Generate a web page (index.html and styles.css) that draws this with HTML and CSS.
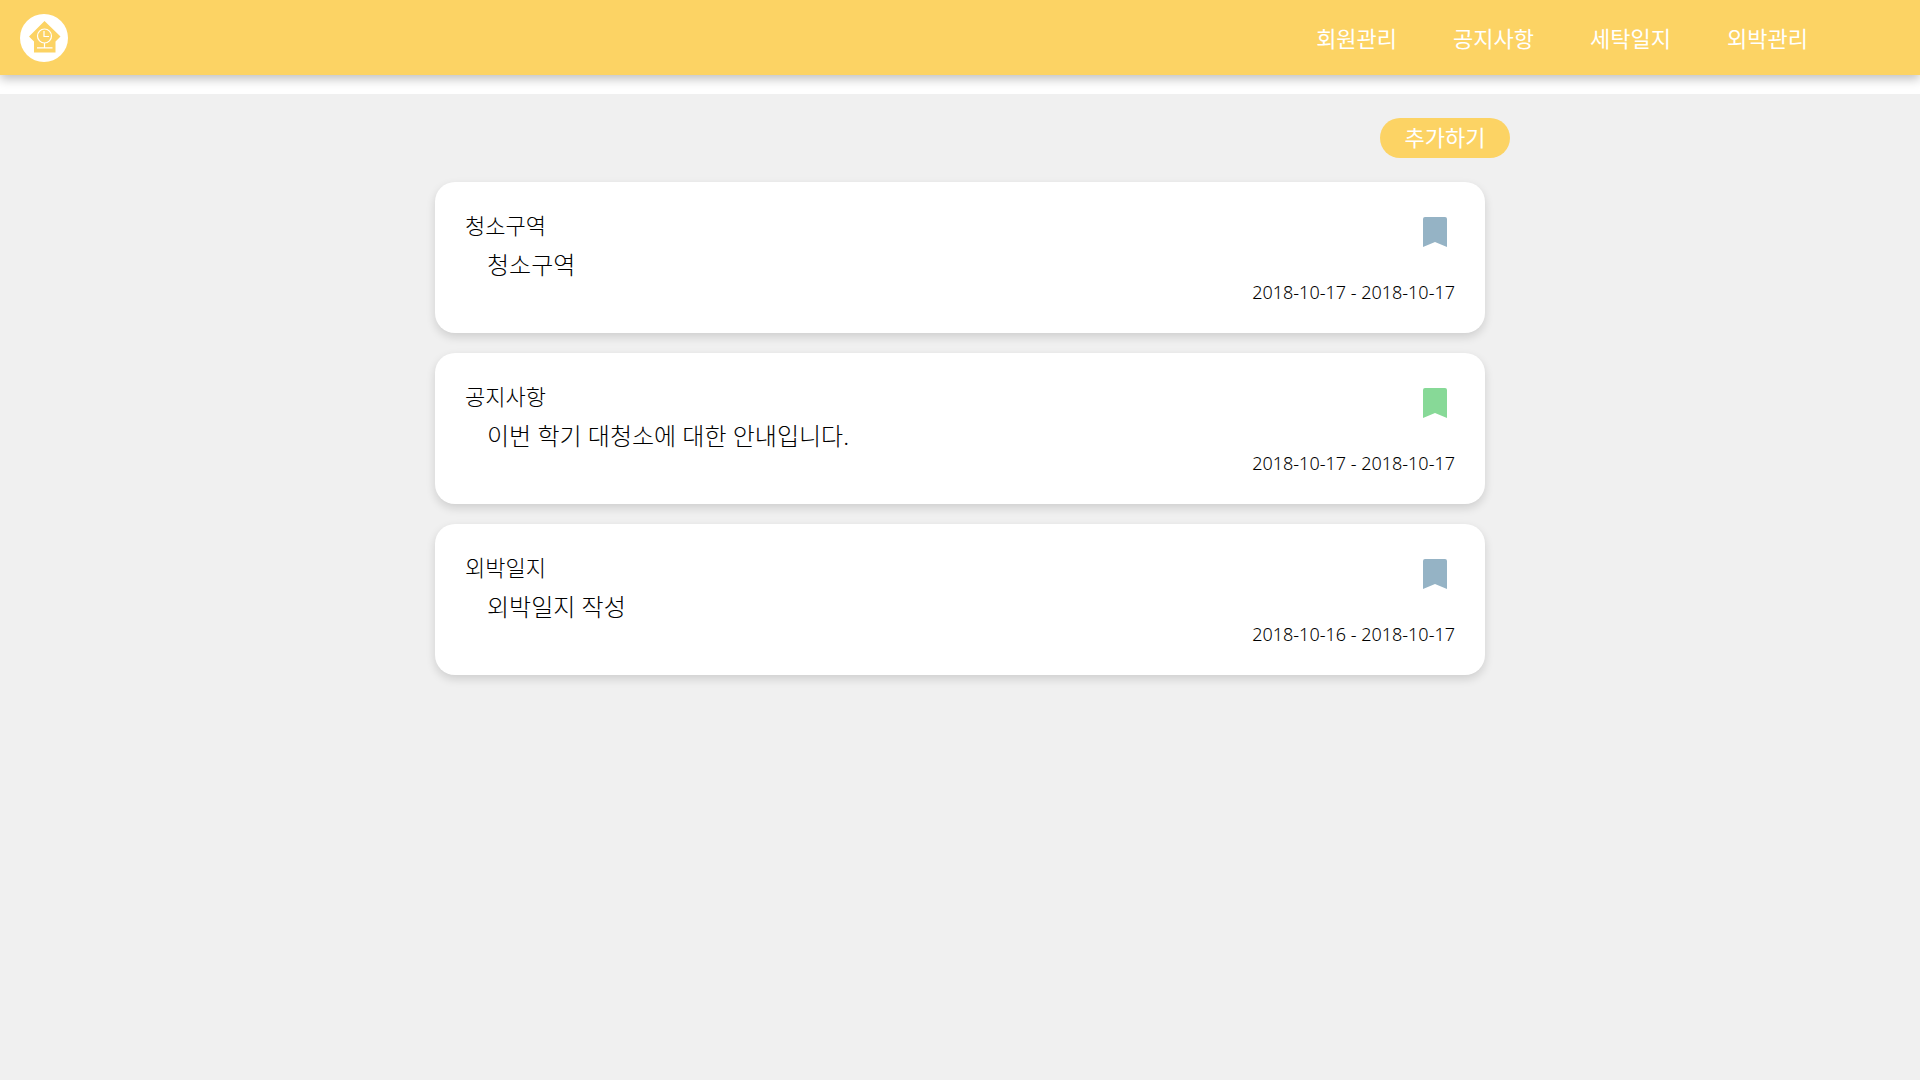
FILE: index.html
```html
<!DOCTYPE html>
<html lang="ko">
<head>
  <meta charset="utf-8">
  <meta name="viewport" content="width=device-width, initial-scale=1">
  <title>공지사항</title>
  <link rel="stylesheet" href="styles.css">
</head>
<body>
  <header class="header">
    <a class="logo" href="#" aria-label="홈">
      <svg class="logo-mark" viewBox="0 0 48 48" aria-hidden="true">
        <circle cx="24" cy="24" r="24" fill="#fff"/>
        <path d="M24.500 7 L40.500 22.500 L35.500 27.500 V38.500 H14 V27.500 L9 22.500 Z" fill="#fcd364"/>
        <g fill="none" stroke="#fff" stroke-width="1.200">
          <circle cx="24.500" cy="22" r="7"/>
          <path d="M24 17 V22.500 H29 M24.500 29 V33.500 M17 33.800 H32.500"/>
        </g>
      </svg>
    </a>
    <nav class="nav">
      <a class="nav-link" href="#">회원관리</a>
      <a class="nav-link" href="#">공지사항</a>
      <a class="nav-link" href="#">세탁일지</a>
      <a class="nav-link" href="#">외박관리</a>
    </nav>
  </header>

  <main class="board">
    <div class="toolbar">
      <button class="add-button" type="button">추가하기</button>
    </div>
    <section class="notices">
      <article class="card">
        <div class="card-text">
          <h2 class="card-title">청소구역</h2>
          <p class="card-content">청소구역</p>
        </div>
        <div class="card-side">
          <svg class="bookmark" viewBox="0 0 24 30" aria-hidden="true"><path d="M0 30V2Q0 0 2 0H22Q24 0 24 2V30L12 25Z"/></svg>
          <p class="card-date">2018-10-17 - 2018-10-17</p>
        </div>
      </article>
      <article class="card">
        <div class="card-text">
          <h2 class="card-title">공지사항</h2>
          <p class="card-content">이번 학기 대청소에 대한 안내입니다.</p>
        </div>
        <div class="card-side">
          <svg class="bookmark bookmark-green" viewBox="0 0 24 30" aria-hidden="true"><path d="M0 30V2Q0 0 2 0H22Q24 0 24 2V30L12 25Z"/></svg>
          <p class="card-date">2018-10-17 - 2018-10-17</p>
        </div>
      </article>
      <article class="card">
        <div class="card-text">
          <h2 class="card-title">외박일지</h2>
          <p class="card-content">외박일지 작성</p>
        </div>
        <div class="card-side">
          <svg class="bookmark" viewBox="0 0 24 30" aria-hidden="true"><path d="M0 30V2Q0 0 2 0H22Q24 0 24 2V30L12 25Z"/></svg>
          <p class="card-date">2018-10-16 - 2018-10-17</p>
        </div>
      </article>
    </section>
  </main>
</body>
</html>
```
FILE: styles.css
```css
* {
  box-sizing: border-box;
}

body {
  margin: 0;
  min-height: 100vh;
  display: flex;
  flex-direction: column;
  background: #fff;
  color: #000;
  font-family: "Noto Sans", "Noto Sans CJK KR", sans-serif;
  font-weight: 300;
}

.header {
  display: flex;
  align-items: center;
  justify-content: space-between;
  min-height: 75px;
  margin-bottom: 19px;
  padding: 0 112px 0 20px;
  background: #fcd364;
  box-shadow: 0 4px 10px rgba(0, 0, 0, 0.25);
}

.logo-mark {
  display: block;
  width: 48px;
  height: 48px;
}

.nav {
  display: flex;
  flex-wrap: wrap;
  gap: 56px;
}

.nav-link {
  color: #fff;
  font-size: 22px;
  font-weight: 400;
  line-height: 30px;
  text-decoration: none;
}

.board {
  flex: 1;
  padding: 24px 20px;
  background: #f0f0f0;
}

.toolbar {
  display: flex;
  justify-content: flex-end;
  max-width: 1100px;
  margin: 0 auto 24px;
}

.add-button {
  width: 130px;
  height: 40px;
  padding: 0 0 2px;
  border: 0;
  border-radius: 20px;
  background: #fcd364;
  color: #fff;
  font: inherit;
  font-size: 22px;
  font-weight: 400;
  line-height: 30px;
}

.notices {
  display: flex;
  flex-direction: column;
  gap: 20px;
  max-width: 1050px;
  margin: 0 auto;
}

.card {
  display: flex;
  justify-content: space-between;
  min-height: 151px;
  padding: 30px;
  border-radius: 20px;
  background: #fff;
  box-shadow: 0 4px 10px rgba(0, 0, 0, 0.14);
}

.card-title {
  margin: 0 0 12px;
  font-size: 22px;
  font-weight: 300;
  line-height: 26px;
}

.card-content {
  margin: 0;
  padding-left: 22px;
  font-size: 24px;
  line-height: 30px;
}

.card-side {
  display: flex;
  flex-direction: column;
  align-items: flex-end;
  justify-content: space-between;
  padding-top: 5px;
}

.bookmark {
  width: 24px;
  height: 30px;
  margin-right: 8px;
  fill: #95b3c5;
}

.bookmark-green {
  fill: #87d997;
}

.card-date {
  margin: 0;
  font-size: 18px;
  line-height: 22px;
}
```
